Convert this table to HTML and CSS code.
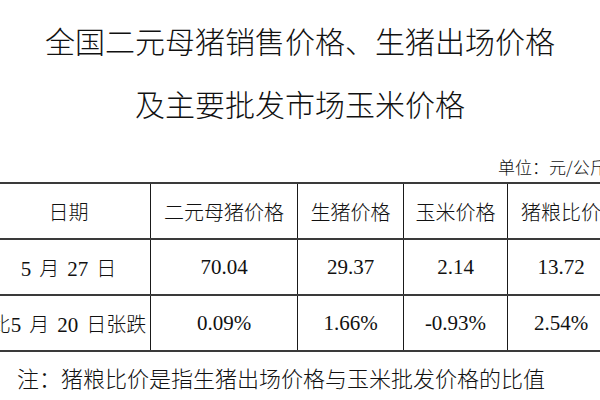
FILE: index.html
```html
<!DOCTYPE html>
<html lang="zh-CN">
<head>
<meta charset="utf-8">
<link rel="stylesheet" href="styles.css">
</head>
<body>
<div class="page">
  <h1 class="title">全国二元母猪销售价格、生猪出场价格</h1>
  <h1 class="title second">及主要批发市场玉米价格</h1>
  <div class="unit">单位：元/公斤</div>
  <div class="table-wrap">
    <table class="prices">
      <colgroup>
        <col class="c1"><col class="c2"><col class="c3"><col class="c4"><col class="c5">
      </colgroup>
      <tr class="head">
        <td>日期</td><td>二元母猪价格</td><td>生猪价格</td><td>玉米价格</td><td>猪粮比价</td>
      </tr>
      <tr>
        <td class="mix"><span class="num gap">5</span>月<span class="num gap-l gap">27</span>日</td>
        <td class="num">70.04</td><td class="num">29.37</td><td class="num">2.14</td><td class="num">13.72</td>
      </tr>
      <tr>
        <td class="mix">比<span class="num gap">5</span>月<span class="num gap-l gap">20</span>日张跌</td>
        <td class="num">0.09%</td><td class="num">1.66%</td><td class="num">-0.93%</td><td class="num">2.54%</td>
      </tr>
    </table>
  </div>
  <p class="note">注：猪粮比价是指生猪出场价格与玉米批发价格的比值</p>
</div>
</body>
</html>
```

FILE: styles.css
```css
html, body {
  margin: 0;
  padding: 0;
  background: #fff;
}
body {
  width: 600px;
  height: 400px;
  overflow: hidden;
  font-family: "Noto Sans CJK SC", "Noto Sans", sans-serif;
  font-weight: 300;
  color: #111;
}
.page {
  width: 600px;
  overflow: hidden;
}
.title {
  margin: 0;
  font-size: 30px;
  font-weight: 300;
  line-height: 36px;
  text-align: center;
  padding-top: 22px;
}
.title.second {
  padding-top: 27px;
}
.unit {
  margin-top: 36px;
  font-size: 17px;
  line-height: 20px;
  white-space: nowrap;
  padding-left: 498px;
}
.table-wrap {
  margin-top: 5px;
  width: 600px;
  overflow: hidden;
}
.prices {
  margin-left: -14px;
  border-collapse: collapse;
  table-layout: fixed;
  width: 628px;
}
.c1 { width: 164px; }
.c2 { width: 147px; }
.c3 { width: 106px; }
.c4 { width: 104px; }
.c5 { width: 107px; }
.prices td {
  border-left: 1px solid #1a1a1a;
  border-right: 1px solid #1a1a1a;
  border-top: 2px solid #3a3a3a;
  border-bottom: 2px solid #3a3a3a;
  text-align: center;
  white-space: nowrap;
  overflow: hidden;
  font-size: 20px;
  padding: 0;
}
.prices tr { height: 56px; }
.prices tr.head td { height: 52px; }
.prices .num {
  font-family: "Liberation Serif", serif;
  font-size: 21px;
  font-weight: 400;
}
.prices .gap { margin-right: 8px; }
.prices .gap-l { margin-left: 8px; }
.note {
  margin: 10px 0 0 17px;
  font-size: 22px;
  line-height: 30px;
  white-space: nowrap;
}
```
